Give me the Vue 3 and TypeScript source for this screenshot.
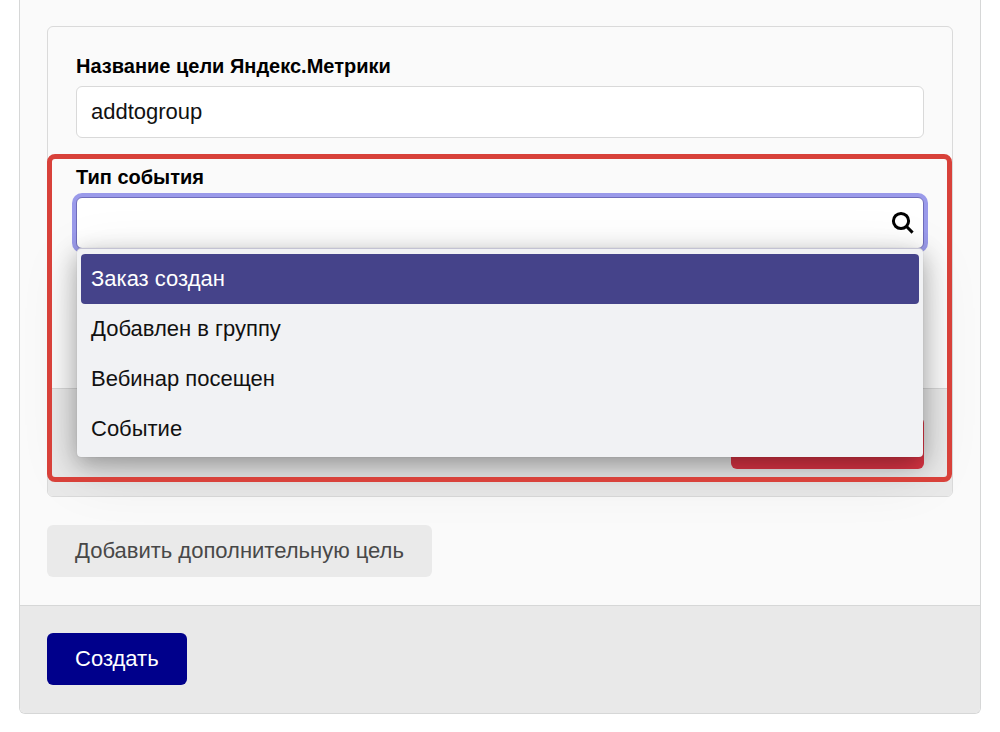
<script setup lang="ts">
import { ref } from 'vue'

const goalName = ref('addtogroup')
const eventQuery = ref('')
const open = ref(true)
const active = ref(0)
const events: string[] = ['Заказ создан', 'Добавлен в группу', 'Вебинар посещен', 'Событие']

function choose(index: number) {
  active.value = index
  eventQuery.value = events[index]
  open.value = false
}
</script>

<template>
  <form class="panel" @submit.prevent>
    <div class="panel-body">
      <section class="goal">
        <div class="goal-body">
          <div class="field">
            <label for="goal-name">Название цели Яндекс.Метрики</label>
            <input id="goal-name" v-model="goalName" class="control" type="text" />
          </div>
          <div class="field">
            <label for="event-type">Тип события</label>
            <div class="combo">
              <input
                id="event-type"
                v-model="eventQuery"
                class="control search"
                :class="{ focused: open }"
                type="text"
                role="combobox"
                aria-controls="event-list"
                :aria-expanded="open"
                autocomplete="off"
                @focus="open = true"
              />
              <ul v-if="open" id="event-list" class="menu" role="listbox" aria-label="Тип события">
                <li
                  v-for="(event, index) in events"
                  :key="event"
                  class="option"
                  :class="{ active: index === active }"
                  role="option"
                  :aria-selected="index === active"
                  @mouseenter="active = index"
                  @click="choose(index)"
                >
                  {{ event }}
                </li>
              </ul>
              <svg class="search-icon" viewBox="0 0 24 24" aria-hidden="true">
                <circle cx="10" cy="10" r="7.6" />
                <path d="M15.3 15.3 21.6 21.6" />
              </svg>
            </div>
          </div>
        </div>
        <div class="goal-footer">
          <button type="button" class="button danger" aria-label="Удалить цель"></button>
        </div>
        <div class="highlight"></div>
      </section>
      <button type="button" class="button secondary">Добавить дополнительную цель</button>
    </div>
    <div class="panel-footer">
      <button type="submit" class="button primary">Создать</button>
    </div>
  </form>
</template>

<style>
body {
  background: #fff;
}
</style>

<style scoped>
.panel,
.panel * {
  box-sizing: border-box;
}

.panel {
  margin: 0 19px 18px;
  border: 1px solid #d6d7d7;
  border-top: 0;
  border-radius: 0 0 6px 6px;
  background: #fafafa;
  font-family: 'Liberation Sans', Arial, sans-serif;
  font-size: 22px;
  line-height: 26px;
  color: #111;
}

.panel-body {
  display: flex;
  flex-direction: column;
  align-items: flex-start;
  gap: 28px;
  padding: 26px 27px 28px;
}

.goal {
  position: relative;
  align-self: stretch;
  border: 1px solid #dadada;
  border-radius: 6px;
}

.goal-body {
  display: flex;
  flex-direction: column;
  gap: 28px;
  padding: 28px 28px 139px;
}

.field {
  display: flex;
  flex-direction: column;
  gap: 9px;
}

label {
  font-size: 20px;
  line-height: 22px;
  font-weight: 700;
  color: #000;
}

.control {
  display: block;
  width: 100%;
  height: 52px;
  margin: 0;
  padding: 0 14px;
  border: 1px solid #d9d9d9;
  border-radius: 6px;
  outline: 0;
  background: #fff;
  font: inherit;
  color: inherit;
}

.combo {
  position: relative;
}

.search {
  padding-right: 44px;
}

.focused {
  border-color: #6f6cba;
  box-shadow: 0 0 0 4px #9a9aea;
}

.search-icon {
  position: absolute;
  z-index: 3;
  top: 14px;
  right: 9px;
  width: 24px;
  height: 24px;
  fill: none;
  stroke: #000;
  stroke-width: 3;
  pointer-events: none;
}

.menu {
  position: absolute;
  z-index: 2;
  top: 51px;
  left: 1px;
  right: 1px;
  margin: 0;
  padding: 5px 4px 3px;
  border-top: 1px solid #c3c2d3;
  border-radius: 4px;
  background: #f1f2f4;
  box-shadow:
    0 0 1px rgba(0, 0, 0, 0.25),
    0 7px 24px rgba(0, 0, 0, 0.32),
    0 14px 60px rgba(0, 0, 0, 0.1);
  list-style: none;
}

.option {
  padding: 12px 10px;
  border-radius: 4px;
  cursor: pointer;
}

.active {
  background: #45438a;
  color: #fff;
}

.goal-footer {
  display: flex;
  justify-content: flex-end;
  padding: 28px 28px 27px;
  border-top: 1px solid #d6d6d6;
  border-radius: 0 0 5px 5px;
  background: #e9e9e9;
}

.highlight {
  position: absolute;
  z-index: 3;
  top: 127px;
  right: 0;
  bottom: 14px;
  left: -1px;
  border: 5px solid #d8413a;
  border-radius: 8px;
  pointer-events: none;
}

.button {
  min-height: 52px;
  margin: 0;
  padding: 0 28px;
  border: 0;
  border-radius: 6px;
  font: inherit;
  cursor: pointer;
}

.danger {
  min-width: 193px;
  background: #dc3545;
}

.secondary {
  background: #eaeaea;
  color: #484848;
}

.primary {
  background: #00008b;
  color: #fff;
}

.panel-footer {
  padding: 27px 27px 28px;
  border-top: 1px solid #d6d7d7;
  border-radius: 0 0 5px 5px;
  background: #e9e9e9;
}
</style>
